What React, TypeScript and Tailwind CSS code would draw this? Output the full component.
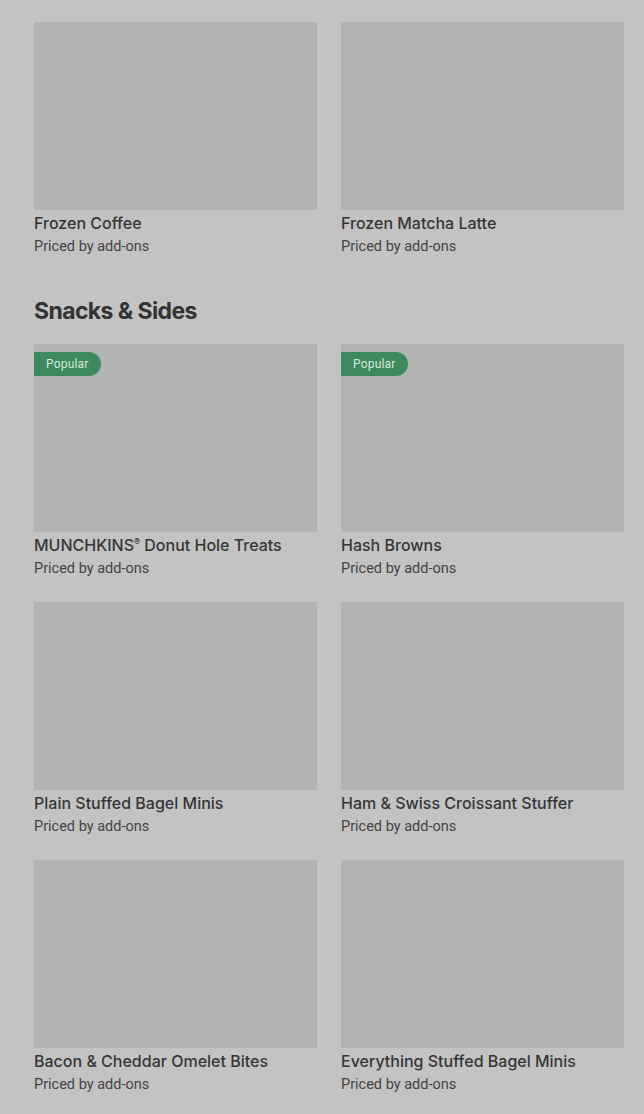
import React from 'react'

type Item = { name: string; reg?: boolean; popular?: boolean }

const drinks: Item[] = [{ name: 'Frozen Coffee' }, { name: 'Frozen Matcha Latte' }]

const snacks: Item[] = [
  { name: 'MUNCHKINS', reg: true, popular: true },
  { name: 'Hash Browns', popular: true },
  { name: 'Plain Stuffed Bagel Minis' },
  { name: 'Ham & Swiss Croissant Stuffer' },
  { name: 'Bacon & Cheddar Omelet Bites' },
  { name: 'Everything Stuffed Bagel Minis' },
]

function Card({ item }: { item: Item }) {
  return (
    <div className="flex flex-col">
      <div className="relative h-[188px] bg-[#b3b3b3]">
        {item.popular && (
          <span className="absolute left-0 top-[8px] h-[24px] pl-[12px] pr-[12px] flex items-center rounded-r-full bg-[#3e8a5f] text-[12px] text-[#d7e6dc] font-['Roboto',sans-serif] tracking-[0.2px]">
            Popular
          </span>
        )}
      </div>
      <div className="mt-[3px] text-[16px] leading-[20px] font-medium text-[#363636]">
        {item.reg ? (
          <>
            MUNCHKINS<sup className="text-[9px] top-[-6px]">®</sup> Donut Hole Treats
          </>
        ) : (
          item.name
        )}
      </div>
      <div className="mt-[4px] text-[14.5px] leading-[20px] text-[#444444] font-['Roboto',sans-serif]">
        Priced by add-ons
      </div>
    </div>
  )
}

export default function App() {
  return (
    <div
      className="min-h-[1114px] bg-[#c3c3c3] pl-[34px] pr-[20px] pt-[22px]"
      style={{ fontFamily: 'Inter, Roboto, "Liberation Sans", sans-serif' }}
    >
      <div className="grid grid-cols-2 gap-x-[24px] gap-y-[23px]">
        {drinks.map((d) => (
          <Card key={d.name} item={d} />
        ))}
      </div>

      <h2 className="mt-[40px] mb-[19px] text-[23px] leading-[28px] font-bold text-[#333333] tracking-[-0.6px]">
        Snacks &amp; Sides
      </h2>

      <div className="grid grid-cols-2 gap-x-[24px] gap-y-[23px]">
        {snacks.map((s) => (
          <Card key={s.name} item={s} />
        ))}
      </div>
    </div>
  )
}
